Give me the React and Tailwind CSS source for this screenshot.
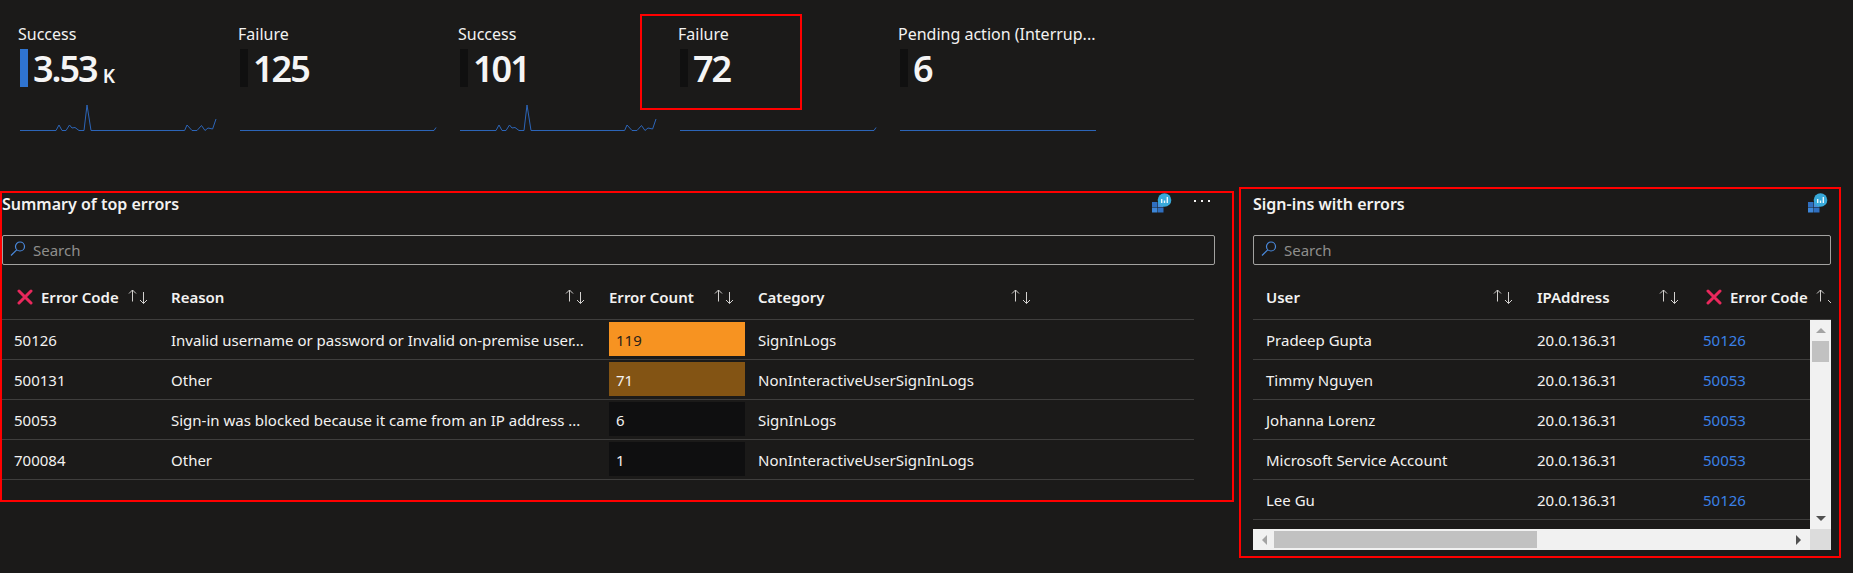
import React from 'react';

const tiles = [
  { title: 'Success', value: '3.53', unit: 'K', bar: 'bg-[#2f74d0]', spark: 'busy' },
  { title: 'Failure', value: '125', bar: 'bg-[#101010]', spark: 'rise' },
  { title: 'Success', value: '101', bar: 'bg-[#101010]', spark: 'busy' },
  { title: 'Failure', value: '72', bar: 'bg-[#101010]', spark: 'rise', boxed: true },
  { title: 'Pending action (Interrup...', value: '6', bar: 'bg-[#101010]', spark: 'flat' },
];

const sparks = {
  busy: '0,27.5 36,27.5 39,22 42,27.5 46,27.5 49.5,22 52,25 55,24.5 59,27.5 64,27.5 67,2 71,27.5 164.6,27.5 167,22 172,27.5 177,27.5 181.5,22.5 185,27.5 188,25 192.6,26 196,16',
  rise: '0,27.5 194,27.5 196,24.5',
  flat: '0,27.5 196,27.5',
};

const errorRows = [
  { code: '50126', reason: 'Invalid username or password or Invalid on-premise user...', count: '119', bar: 'bg-[#f79321] text-[#2a2118]', category: 'SignInLogs' },
  { code: '500131', reason: 'Other', count: '71', bar: 'bg-[#835414] text-[#f3f2f1]', category: 'NonInteractiveUserSignInLogs' },
  { code: '50053', reason: 'Sign-in was blocked because it came from an IP address ...', count: '6', bar: 'bg-[#0f0f10] text-[#f3f2f1]', category: 'SignInLogs' },
  { code: '700084', reason: 'Other', count: '1', bar: 'bg-[#0f0f10] text-[#f3f2f1]', category: 'NonInteractiveUserSignInLogs' },
];

const signIns = [
  { user: 'Pradeep Gupta', code: '50126' },
  { user: 'Timmy Nguyen', code: '50053' },
  { user: 'Johanna Lorenz', code: '50053' },
  { user: 'Microsoft Service Account', code: '50053' },
  { user: 'Lee Gu', code: '50126' },
];

const SortArrows = () => (
  <svg width="20" height="16" viewBox="0 0 20 16" fill="none" stroke="#d2d0ce" strokeWidth="1" className="shrink-0">
    <path d="M4.5 12.5V1M1 4.5 4.5 1 8 4.5" />
    <path d="M15.5 3v11.5M12 11l3.5 3.5L19 11" />
  </svg>
);

const RedX = () => (
  <svg width="16" height="16" viewBox="0 0 16 16" fill="none" stroke="#e9285c" strokeWidth="3" strokeLinecap="round" className="shrink-0">
    <path d="M2 2l12 12M14 2 2 14" />
  </svg>
);

const SearchBox = ({ className }) => (
  <div className={`flex h-[30px] items-center rounded-[2px] border border-[#a3a2a0] ${className}`}>
    <svg width="16" height="16" viewBox="0 0 16 16" fill="none" stroke="#4a8ade" strokeWidth="1.2" className="ml-[7px] -mt-[3px] shrink-0">
      <circle cx="10" cy="5.5" r="4.5" />
      <path d="M6.7 8.8 1 14.5" />
    </svg>
    <span className="ml-[7px] text-[15px] text-[#8f8e8c]">Search</span>
  </div>
);

const WorkbookIcon = () => (
  <svg width="20" height="20" viewBox="0 0 20 20" className="shrink-0">
    <rect x="0" y="9" width="5.5" height="5" fill="#2f6fc0" />
    <rect x="0" y="14.5" width="5.5" height="5" fill="#3d86d8" />
    <rect x="6" y="14.5" width="5.5" height="5" fill="#2f6fc0" />
    <rect x="6" y="9" width="5.5" height="5" fill="#4a90d9" />
    <circle cx="12.5" cy="7" r="6.8" fill="#38a9d9" />
    <rect x="9" y="6" width="1.4" height="4" fill="#e8f6fc" />
    <rect x="11.8" y="7.5" width="1.4" height="2.5" fill="#e8f6fc" />
    <rect x="14.6" y="4" width="1.4" height="6" fill="#e8f6fc" />
  </svg>
);

const Triangle = ({ dir, color }) => {
  const points = { up: '0,6 5,1 10,6', down: '0,1 10,1 5,6', left: '6,0 6,10 1,5', right: '1,0 1,10 6,5' }[dir];
  const size = dir === 'up' || dir === 'down' ? { width: 10, height: 7, box: '0 0 10 7' } : { width: 7, height: 10, box: '0 0 7 10' };
  return (
    <svg width={size.width} height={size.height} viewBox={size.box} fill={color} className="shrink-0">
      <polygon points={points} />
    </svg>
  );
};

const Tile = ({ title, value, unit, bar, spark, boxed }) => (
  <div className="relative w-[220px] shrink-0 pl-[18px]">
    {/* red annotation around the fourth tile */}
    {boxed && <div className="absolute left-[-20px] top-[-10px] h-[96px] w-[162px] border-2 border-[#ff0000]" />}
    <div className="-mt-px h-[22px] w-[200px] truncate text-[16px] leading-[22px] text-[#f3f2f1]">{title}</div>
    <div className="mt-[4px] flex h-[38px] items-center pl-[2px]">
      <div className={`h-[38px] w-[8px] shrink-0 ${bar}`} />
      <span className="ml-[5px] pt-[2px] text-[36px] font-semibold leading-[38px] tracking-[-2px] text-[#f5f5f5]">{value}</span>
      {unit && <span className="ml-[6px] mt-[16px] text-[19px] font-semibold leading-[20px] text-[#f5f5f5]">{unit}</span>}
    </div>
    <svg width="197" height="30" viewBox="0 0 197 30" fill="none" stroke="#2c65b8" strokeWidth="1" className="mt-[16px] ml-[2px]">
      <polyline points={sparks[spark]} />
    </svg>
  </div>
);

const HeaderCell = ({ label, icon, className }) => (
  <div className={`flex items-center justify-between pt-[10px] ${className}`}>
    <div className="flex items-center">
      {icon && <span className="mr-[8px] flex"><RedX /></span>}
      <span className="whitespace-nowrap text-[15px] font-semibold text-[#f3f2f1]">{label}</span>
    </div>
    <SortArrows />
  </div>
);

const App = () => {
  return (
    <div className="h-[573px] w-[1853px] overflow-hidden bg-[#1b1a19] font-['Noto_Sans',sans-serif] text-[15px] text-[#f3f2f1]">
      <div className="flex h-[187px] pt-[24px]">
        {tiles.map((tile, i) => (
          <Tile key={i} {...tile} />
        ))}
      </div>

      <div className="flex items-start">
        {/* Summary of top errors */}
        <div className="mt-[4px] h-[311px] w-[1234px] shrink-0 border-2 border-[#ff0000] pr-[17px]">
          <div className="flex h-[42px] items-start justify-between">
            <div className="text-[16px] font-semibold leading-[22px] text-[#f3f2f1]">Summary of top errors</div>
            <div className="flex items-start">
              <WorkbookIcon />
              <div className="ml-[22px] mr-[5px] mt-[7px] flex gap-[5px]">
                <span className="h-[2px] w-[2px] bg-[#f3f2f1]" />
                <span className="h-[2px] w-[2px] bg-[#f3f2f1]" />
                <span className="h-[2px] w-[2px] bg-[#f3f2f1]" />
              </div>
            </div>
          </div>
          <SearchBox />
          <div className="w-[1192px]">
            <div className="grid h-[55px] grid-cols-[157px_438px_149px_297px_151px] border-b border-[#3f3e3d]">
              <HeaderCell label="Error Code" icon className="pl-[15px] pr-[11px]" />
              <HeaderCell label="Reason" className="pl-[12px] pr-[12px]" />
              <HeaderCell label="Error Count" className="pl-[12px] pr-[12px]" />
              <HeaderCell label="Category" className="pl-[12px] pr-[12px]" />
              <div />
            </div>
            {errorRows.map((row) => (
              <div key={row.code} className="grid h-[40px] grid-cols-[157px_438px_149px_297px_151px] border-b border-[#3f3e3d]">
                <div className="pl-[12px] leading-[40px]">{row.code}</div>
                <div className="truncate pl-[12px] leading-[40px]">{row.reason}</div>
                <div className="pl-[12px] pt-[2px]">
                  <div className={`h-[34px] w-[136px] pl-[7px] leading-[36px] ${row.bar}`}>{row.count}</div>
                </div>
                <div className="pl-[12px] leading-[40px]">{row.category}</div>
                <div />
              </div>
            ))}
          </div>
        </div>

        {/* Sign-ins with errors */}
        <div className="ml-[5px] h-[371px] w-[602px] shrink-0 border-2 border-[#ff0000] pl-[12px] pr-[8px] pt-[4px]">
          <div className="flex h-[42px] items-start justify-between pr-[3px]">
            <div className="text-[16px] font-semibold leading-[22px] text-[#f3f2f1]">Sign-ins with errors</div>
            <WorkbookIcon />
          </div>
          <SearchBox />
          <div className="w-[578px]">
            <div className="flex h-[55px] overflow-hidden border-b border-[#3f3e3d]">
              <HeaderCell label="User" className="w-[272px] shrink-0 pl-[13px] pr-[12px]" />
              <HeaderCell label="IPAddress" className="w-[166px] shrink-0 pl-[12px] pr-[12px]" />
              <HeaderCell label="Error Code" icon className="w-[160px] shrink-0 pl-[15px] pr-[15px]" />
            </div>
            <div className="flex h-[209px]">
              <div className="w-[557px] shrink-0">
                {signIns.map((row) => (
                  <div key={row.user} className="flex h-[40px] border-b border-[#3f3e3d] leading-[40px]">
                    <div className="w-[272px] shrink-0 pl-[13px]">{row.user}</div>
                    <div className="w-[166px] shrink-0 pl-[12px]">20.0.136.31</div>
                    <div className="pl-[12px] text-[#3a80e6]">{row.code}</div>
                  </div>
                ))}
              </div>
              <div className="flex w-[21px] shrink-0 flex-col items-center bg-[#f1f1f1]">
                <div className="flex h-[21px] items-center"><Triangle dir="up" color="#a3a3a3" /></div>
                <div className="h-[21px] w-[17px] bg-[#c1c1c1]" />
                <div className="flex-1" />
                <div className="flex h-[21px] items-center"><Triangle dir="down" color="#505050" /></div>
              </div>
            </div>
            <div className="flex h-[21px]">
              <div className="flex w-[557px] shrink-0 items-center bg-[#f1f1f1] pl-[8px] pr-[8px]">
                <Triangle dir="left" color="#a3a3a3" />
                <div className="ml-[6px] h-[17px] w-[263px] bg-[#c1c1c1]" />
                <div className="flex-1" />
                <Triangle dir="right" color="#505050" />
              </div>
              <div className="w-[21px] shrink-0 bg-[#dcdcdc]" />
            </div>
          </div>
        </div>
      </div>
    </div>
  );
};

export default App;
